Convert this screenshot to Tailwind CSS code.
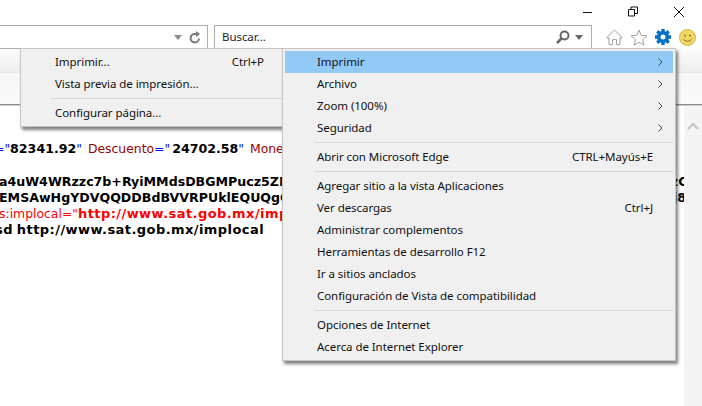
<!DOCTYPE html>
<html lang="en">
<head>
<meta charset="UTF-8">
<title>Internet Explorer</title>
<script src="https://cdn.jsdelivr.net/npm/@tailwindcss/browser@4"></script>
</head>
<body class="w-[702px] h-[406px] overflow-hidden relative bg-white font-['Noto_Sans',sans-serif] text-[11.5px] tracking-[-0.06px] text-[#111]">

  <!-- window controls -->
  <div class="h-[25px] flex justify-end items-start">
    <svg width="120" height="25" viewBox="0 0 120 25" fill="none" stroke="#111" stroke-width="1">
      <path d="M1 12.500h9"/>
      <path d="M46.500 9.500h6v6.500h-6z M49 9.500v-2.500h6.500v6.500h-3"/>
      <path d="M92 7l10 10M102 7l-10 10"/>
    </svg>
  </div>

  <!-- address + search -->
  <div class="flex h-[24px]">
    <div class="w-[208px] border border-l-0 border-[#adadad] flex items-center justify-end pr-[6px] gap-[7px]">
      <svg width="8" height="5" viewBox="0 0 8 5"><path d="M0 0h8L4 5z" fill="#8a8a8a"/></svg>
      <svg width="12" height="13" viewBox="0 0 12 13" fill="none"><path d="M10 7.500A4.200 4.200 0 1 1 6 3h2" stroke="#777" stroke-width="2"/><path d="M7 0l4 3-4 3z" fill="#777"/></svg>
    </div>
    <div class="w-[378px] ml-[6px] border border-[#adadad] flex items-center pl-[7px] pr-[8px] justify-between">
      <span class="text-[#222]">Buscar...</span>
      <div class="flex items-center gap-[5px]">
        <svg width="14" height="14" viewBox="0 0 14 14" fill="none"><circle cx="8.500" cy="5.500" r="4" stroke="#666" stroke-width="2"/><path d="M5.500 8.500L1 13" stroke="#666" stroke-width="2.500"/></svg>
        <svg width="8" height="5" viewBox="0 0 8 5"><path d="M0 0h8L4 5z" fill="#666"/></svg>
      </div>
    </div>
    <div class="flex items-center ml-[14px] gap-[7px]">
      <svg width="17" height="17" viewBox="0 0 17 17" fill="#fff" stroke="#a0a0a0"><path d="M.7 8.500L8.500 1l7.800 7.500-1.300 1-1-.9v7h-3.500v-5H6.500v5H3V8.600l-1 .9z"/></svg>
      <svg width="18" height="17" viewBox="0 0 18 17" fill="#fff" stroke="#a0a0a0"><path d="M9 1l2.300 5.400 5.700.4-4.400 3.700 1.400 5.700L9 13.100 4 16.200l1.400-5.700L1 6.800l5.700-.4z"/></svg>
      <svg width="16" height="16" viewBox="0 0 16 16" fill="none"><circle cx="8" cy="8" r="4.300" stroke="#0072c6" stroke-width="3.600"/><path d="M8 0v3M8 13v3M0 8h3M13 8h3M2.300 2.300l2.200 2.200M11.500 11.500l2.200 2.200M2.300 13.700l2.200-2.200M11.500 4.500l2.200-2.200" stroke="#0072c6" stroke-width="3.400"/></svg>
      <svg width="17" height="17" viewBox="0 0 17 17" class="ml-[1px]"><circle cx="8.500" cy="8.500" r="8" fill="#f3d765" stroke="#c9b25a"/><circle cx="6" cy="6.500" r="1" fill="#8a7420"/><circle cx="11" cy="6.500" r="1" fill="#8a7420"/><path d="M4.500 10.500q4 3.500 8 0" fill="none" stroke="#8a7420"/></svg>
    </div>
  </div>

  <!-- toolbar bands -->
  <div class="h-[26px] bg-gradient-to-b from-[#fcfcfc] to-[#ececec] border-b border-white"></div>
  <div class="h-[30px] bg-gradient-to-b from-[#f6f6f6] to-[#fbfbfb] border-b border-[#8c8c8c]"></div>

  <!-- document -->
  <div class="flex h-[301px] border-t border-[#cfcfcf]">
    <div class="w-[684px] pt-[35px] font-['DejaVu_Sans',sans-serif] leading-[16px] tracking-normal whitespace-nowrap overflow-hidden font-bold text-black">
      <div class="font-normal text-[12.400px] h-[16px] -ml-[6px]"><span class="text-[#0000ff]">=&quot;</span><b class="text-[12.600px]">82341.92</b><span class="text-[#0000ff]">&quot;</span> <span class="text-[#990000] ml-[2px]">Descuento</span><span class="text-[#0000ff] mr-[2px]">=&quot;</span><b class="text-[12.600px]">24702.58</b><span class="text-[#0000ff]">&quot;</span> <span class="text-[#990000] ml-[2px]">Moneda</span></div>
      <div class="mt-[17px] h-[16px] text-[12.600px] -ml-[1px]">a4uW4WRzzc7b+RyiMMdsDBGMPucz5ZMDGHkiuVQ2mXc7TnRb0aKp3YfLs9WdJe1GhOxT2uPqNzC0</div>
      <div class="h-[16px] text-[12.600px] -ml-[1px]">EMSAwHgYDVQQDDBdBVVRPUklEQUQgQ0VSVElGSUNBRE9SQTEbMBkGA1UECwwSU28YZW4xMj8NDc48</div>
      <div class="h-[16px] text-[13px] tracking-[0.43px] text-[#ff0000] -ml-[1px]"><span class="font-normal text-[12.400px] tracking-normal">s:implocal=&quot;</span>http://www.sat.gob.mx/implocal</div>
      <div class="h-[16px] text-[13px] tracking-[0.43px] [word-spacing:-1px] -ml-[5px]">sd http://www.sat.gob.mx/implocal</div>
    </div>
    <div class="w-[18px] bg-[#f4f4f4] flex justify-center pt-[16px]">
      <svg width="12" height="8" viewBox="0 0 12 8" fill="none"><path d="M1 7l5-5 5 5" stroke="#c4c4c4" stroke-width="2.200"/></svg>
    </div>
  </div>

  <!-- print submenu -->
  <div class="absolute left-[20px] top-[48px] w-[265px] h-[79px] bg-[#f0f0f0] border border-[#c6c6c6] shadow-[2px_3px_3px_rgba(0,0,0,0.5)] pt-[2px] pl-[34px]">
    <div class="h-[22px] flex items-center justify-between pr-[20px]"><span>Imprimir...</span><span>Ctrl+P</span></div>
    <div class="h-[22px] flex items-center"><span>Vista previa de impresión...</span></div>
    <div class="h-[1px] bg-[#d6d6d6] mt-[3px] mb-[3px] -ml-[4px] mr-[2px]"></div>
    <div class="h-[22px] flex items-center"><span>Configurar página...</span></div>
  </div>

  <!-- tools menu -->
  <div class="absolute left-[282px] top-[48px] w-[394px] h-[313px] bg-[#f0f0f0] border border-[#c6c6c6] shadow-[2px_3px_3px_rgba(0,0,0,0.5)] pt-[2px] pl-[2px] pr-[2px]">
    <div class="h-[22px] bg-[#91c9f7] flex items-center justify-between pl-[32px] pr-[10px]"><span>Imprimir</span><svg width="5" height="8" viewBox="0 0 5 8" fill="none"><path d="M.5.500L4 4 .5 7.500" stroke="#444"/></svg></div>
    <div class="h-[22px] flex items-center justify-between pl-[32px] pr-[10px]"><span>Archivo</span><svg width="5" height="8" viewBox="0 0 5 8" fill="none"><path d="M.5.500L4 4 .5 7.500" stroke="#444"/></svg></div>
    <div class="h-[22px] flex items-center justify-between pl-[32px] pr-[10px]"><span>Zoom (100%)</span><svg width="5" height="8" viewBox="0 0 5 8" fill="none"><path d="M.5.500L4 4 .5 7.500" stroke="#444"/></svg></div>
    <div class="h-[22px] flex items-center justify-between pl-[32px] pr-[10px]"><span>Seguridad</span><svg width="5" height="8" viewBox="0 0 5 8" fill="none"><path d="M.5.500L4 4 .5 7.500" stroke="#444"/></svg></div>
    <div class="h-[1px] bg-[#d6d6d6] my-[3px] ml-[30px]"></div>
    <div class="h-[22px] flex items-center justify-between pl-[32px] pr-[20px]"><span>Abrir con Microsoft Edge</span><span>CTRL+Mayús+E</span></div>
    <div class="h-[1px] bg-[#d6d6d6] my-[3px] ml-[30px]"></div>
    <div class="h-[22px] flex items-center pl-[32px]"><span>Agregar sitio a la vista Aplicaciones</span></div>
    <div class="h-[22px] flex items-center justify-between pl-[32px] pr-[20px]"><span>Ver descargas</span><span>Ctrl+J</span></div>
    <div class="h-[22px] flex items-center pl-[32px]"><span>Administrar complementos</span></div>
    <div class="h-[22px] flex items-center pl-[32px]"><span>Herramientas de desarrollo F12</span></div>
    <div class="h-[22px] flex items-center pl-[32px]"><span>Ir a sitios anclados</span></div>
    <div class="h-[22px] flex items-center pl-[32px]"><span>Configuración de Vista de compatibilidad</span></div>
    <div class="h-[1px] bg-[#d6d6d6] my-[3px] ml-[30px]"></div>
    <div class="h-[22px] flex items-center pl-[32px]"><span>Opciones de Internet</span></div>
    <div class="h-[22px] flex items-center pl-[32px]"><span>Acerca de Internet Explorer</span></div>
  </div>
</body>
</html>
